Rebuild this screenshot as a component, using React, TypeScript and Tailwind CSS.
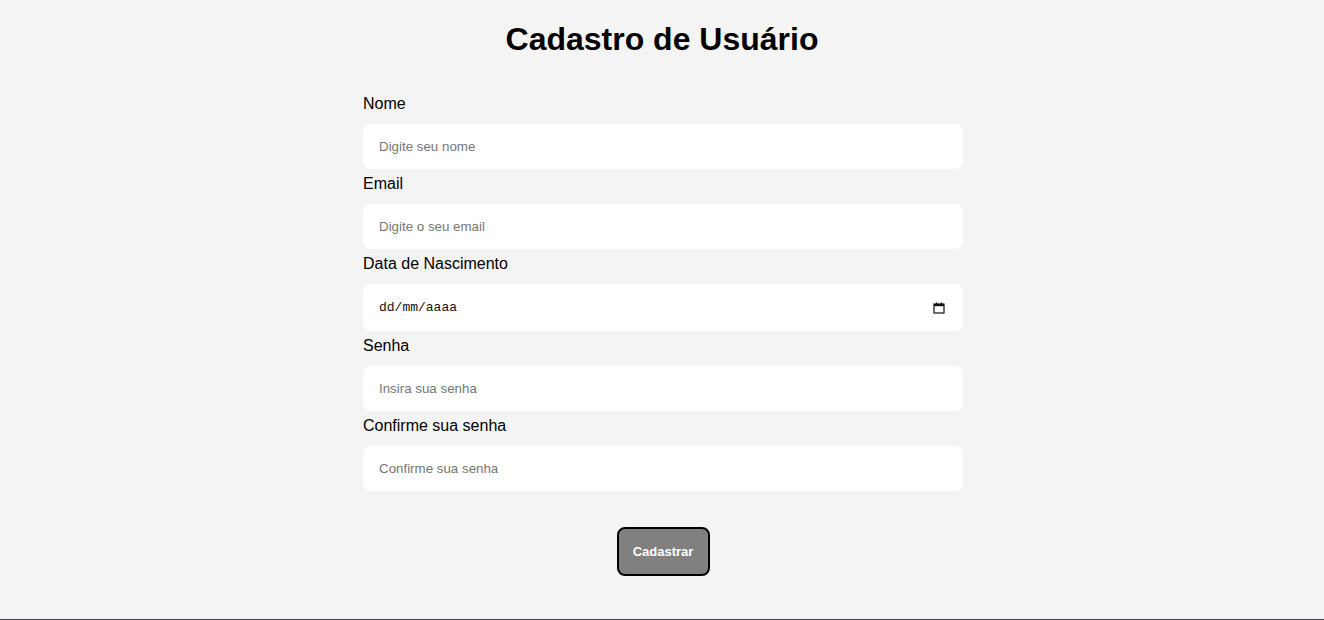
import React from "react";

const fields = [
  { label: "Nome", placeholder: "Digite seu nome", type: "text" },
  { label: "Email", placeholder: "Digite o seu email", type: "email" },
  { label: "Data de Nascimento", placeholder: "", type: "date" },
  { label: "Senha", placeholder: "Insira sua senha", type: "password" },
  { label: "Confirme sua senha", placeholder: "Confirme sua senha", type: "password" },
];

function CalendarIcon() {
  return (
    <svg width="12" height="12" viewBox="0 0 12 12" className="block">
      <rect x="1" y="2" width="10" height="9" fill="none" stroke="#111" strokeWidth="1.2" />
      <rect x="1" y="2" width="10" height="2.2" fill="#111" />
      <rect x="3" y="0.5" width="1.2" height="2" fill="#111" />
      <rect x="7.8" y="0.5" width="1.2" height="2" fill="#111" />
    </svg>
  );
}

export default function App() {
  return (
    <div
      className="h-[620px] bg-[#f4f4f4] border-b border-[#3c3c46] flex flex-col items-center"
      style={{ fontFamily: '"Liberation Sans", Arial, sans-serif' }}
    >
      <h1 className="mt-[21px] text-[32px] font-bold leading-[37px] text-black">
        Cadastro de Usuário
      </h1>

      <form
        className="mt-[36px] ml-[2px] w-[600px] flex flex-col"
        onSubmit={(e) => e.preventDefault()}
      >
        {fields.map((f) => (
          <div key={f.label} className="flex flex-col">
            <label className="pt-[1px] text-[16px] leading-[18px] text-black">{f.label}</label>
            {f.type === "date" ? (
              <div className="mt-[11px] mb-[5px] h-[47px] bg-white rounded-[8px] flex items-center justify-between pl-[16px] pr-[18px]">
                <span
                  className="text-[13px] text-[#111]"
                  style={{ fontFamily: '"Liberation Mono", "DejaVu Sans Mono", monospace' }}
                >
                  dd/mm/aaaa
                </span>
                <CalendarIcon />
              </div>
            ) : (
              <input
                type={f.type}
                placeholder={f.placeholder}
                className="mt-[11px] mb-[5px] h-[45px] bg-white rounded-[8px] px-[16px] text-[13.33px] outline-none placeholder:text-[#767676]"
                style={{ fontFamily: '"Liberation Sans", Arial, sans-serif' }}
              />
            )}
          </div>
        ))}

        <div className="flex justify-center mt-[31px]">
          <button
            type="submit"
            className="w-[93px] h-[49px] bg-[#808080] border-2 border-black rounded-[8px] text-white text-[13px] font-bold"
          >
            Cadastrar
          </button>
        </div>
      </form>
    </div>
  );
}
